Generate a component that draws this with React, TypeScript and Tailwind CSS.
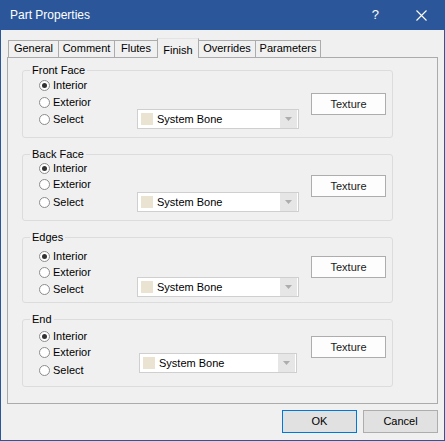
const tabs = [
  { label: 'General', w: 'w-[50px]' },
  { label: 'Comment', w: 'w-[56px]' },
  { label: 'Flutes', w: 'w-[43px]' },
  { label: 'Finish', w: 'w-[42px]', active: true },
  { label: 'Overrides', w: 'w-[56px]' },
  { label: 'Parameters', w: 'w-[66px]' },
];

// per-group offsets, the dialog is not quite regular
const groups = [
  { title: 'Front Face', h: 'h-[68px]', radioTop: 'mt-[6px]', rows: ['h-[17px]', 'h-[17px]', 'h-[17px]'], texTop: 'mt-[22px]', ddTop: 'mt-[38px]', radioW: 'w-[98px]', ddW: 'w-[162px]', texL: 'ml-[12px]' },
  { title: 'Back Face', h: 'h-[67px]', radioTop: 'mt-[5px]', rows: ['h-[16px]', 'h-[17px]', 'h-[18px]'], texTop: 'mt-[20px]', ddTop: 'mt-[37px]', radioW: 'w-[98px]', ddW: 'w-[162px]', texL: 'ml-[12px]' },
  { title: 'Edges', h: 'h-[66px]', radioTop: 'mt-[11px]', rows: ['h-[15px]', 'h-[17px]', 'h-[17px]'], texTop: 'mt-[18px]', ddTop: 'mt-[39px]', radioW: 'w-[98px]', ddW: 'w-[162px]', texL: 'ml-[12px]' },
  { title: 'End', h: 'h-[68px]', radioTop: 'mt-[8px]', rows: ['h-[16px]', 'h-[17px]', 'h-[18px]'], texTop: 'mt-[16px]', ddTop: 'mt-[33px]', radioW: 'w-[100px]', ddW: 'w-[158px]', texL: 'ml-[14px]' },
];

function Radio({ label, checked, h }: { label: string; checked?: boolean; h: string }) {
  return (
    <div className={`flex items-center ${h}`}>
      <span className="flex h-[11px] w-[11px] items-center justify-center rounded-full border border-[#8c8c8c] bg-white">
        {checked && <span className="h-[5px] w-[5px] rounded-full bg-[#333]" />}
      </span>
      <span className="ml-[3px]">{label}</span>
    </div>
  );
}

function Dropdown({ w }: { w: string }) {
  return (
    <div className={`flex h-[20px] ${w} items-center border border-[#cfcfcf] bg-white`}>
      <span className="ml-[3px] h-[12px] w-[12px] bg-[#ebe3d2]" />
      <span className="ml-[4px] flex-1 text-black">System Bone</span>
      <span className="mr-px flex h-[18px] w-[17px] items-center justify-center bg-[#e6e6e6]">
        <svg width="7" height="4" viewBox="0 0 7 4">
          <path d="M0 0h7L3.5 4z" fill="#adadad" />
        </svg>
      </span>
    </div>
  );
}

function Group({ g }: { g: (typeof groups)[number] }) {
  return (
    <div className={`relative flex ${g.h} w-[371px] items-start rounded-[3px] border border-[#dcdcdc]`}>
      <span className="absolute -top-[8px] left-[7px] bg-[#f0f0f0] px-[2px] leading-[14px]">{g.title}</span>
      <div className={`ml-[16px] ${g.radioW} ${g.radioTop}`}>
        <Radio label="Interior" checked h={g.rows[0]} />
        <Radio label="Exterior" h={g.rows[1]} />
        <Radio label="Select" h={g.rows[2]} />
      </div>
      <div className={g.ddTop}>
        <Dropdown w={g.ddW} />
      </div>
      <button
        className={`${g.texL} ${g.texTop} flex h-[22px] w-[75px] items-center justify-center border border-[#adadad] bg-[#fdfdfd] text-[#1a1a1a]`}
      >
        Texture
      </button>
    </div>
  );
}

export default function App() {
  return (
    <div
      className="flex h-[441px] w-[445px] flex-col bg-[#2b579a] px-px pb-px text-[11px] text-black"
      style={{ fontFamily: '"Liberation Sans", Arial, sans-serif' }}
    >
      {/* Title bar */}
      <div className="flex h-[30px] shrink-0 items-center pl-[9px] text-white">
        <span className="text-[12px]">Part Properties</span>
        <span className="ml-auto text-[13px]">?</span>
        <svg className="ml-[37px] mr-[17px]" width="11" height="11" viewBox="0 0 11 11">
          <path d="M0.5 0.5l10 10M10.5 0.5l-10 10" stroke="#fff" strokeWidth="1.1" />
        </svg>
      </div>

      {/* Body */}
      <div className="flex flex-1 flex-col bg-[#f0f0f0] pl-[6px] pt-[8px]">
        {/* Tab strip */}
        <div className="relative z-10 ml-px flex h-[20px] items-end">
          {tabs.map((t, i) =>
            t.active ? (
              <div
                key={t.label}
                className={`${t.w} flex h-[20px] justify-center border-x border-t border-x-[#acacac] border-t-[#e3e3e3] bg-[#f0f0f0] pt-[4px] leading-[14px]`}
              >
                {t.label}
              </div>
            ) : (
              <div
                key={t.label}
                className={`${t.w} mb-px flex h-[17px] justify-center border-t border-[#acacac] ${
                  i === tabs.length - 1 ? 'border-x' : 'border-l'
                } ${tabs[i - 1]?.active ? 'border-l-0' : ''} leading-[15px]`}
              >
                {t.label}
              </div>
            )
          )}
        </div>

        {/* Tab panel */}
        <div className="-mt-px flex h-[347px] w-[431px] flex-col gap-[16px] border border-[#ababab] pl-[14px] pt-[12px]">
          {groups.map((g) => (
            <Group key={g.title} g={g} />
          ))}
        </div>

        {/* Buttons */}
        <div className="mt-[6px] flex justify-end gap-[6px] pr-[6px]">
          <button className="flex h-[23px] w-[75px] items-center justify-center border border-[#0078d7] bg-[#e1e1e1]">
            OK
          </button>
          <button className="flex h-[23px] w-[75px] items-center justify-center border border-[#adadad] bg-[#e1e1e1]">
            Cancel
          </button>
        </div>
      </div>
    </div>
  );
}
